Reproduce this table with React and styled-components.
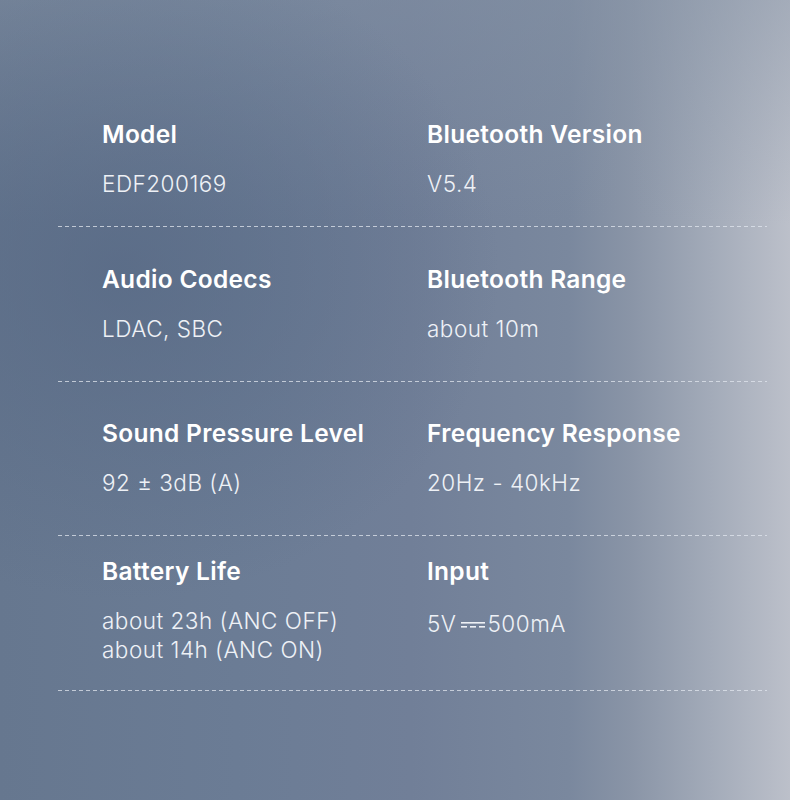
import React from "react";
import styled, { createGlobalStyle } from "styled-components";

const Global = createGlobalStyle`
  html, body { margin: 0; padding: 0; }
  body { font-family: Inter, "Noto Sans", sans-serif; }
`;

const Page = styled.div`
  width: 790px;
  height: 800px;
  overflow: hidden;
  box-sizing: border-box;
  padding: 91px 23px 0 58px;
  background:
    radial-gradient(ellipse 380px 330px at 120px 270px, rgba(86, 104, 132, 0.7), rgba(86, 104, 132, 0) 100%),
    linear-gradient(to bottom, rgba(135, 148, 166, 0.45), rgba(135, 148, 166, 0) 28%),
    linear-gradient(to right, #66778f 0%, #6b7c95 30%, #717f98 52%, #7a889e 72%, #8a95a7 80%, #a3abb9 90%, #bcc0ca 100%);
`;

const Row = styled.div`
  display: grid;
  grid-template-columns: 325px 1fr;
  align-content: center;
  align-items: start;
  box-sizing: border-box;
  height: ${(p) => (p.$first ? 136 : 154.5)}px;
  padding-left: 44px;
  padding-bottom: ${(p) => (p.$last ? 7 : 2)}px;
  background-image: repeating-linear-gradient(
    to right,
    rgba(225, 230, 238, 0.75) 0 4px,
    transparent 4px 7px
  );
  background-size: 100% 1px;
  background-repeat: no-repeat;
  background-position: bottom left;
`;

const Cell = styled.div`
  display: flex;
  flex-direction: column;
`;

const Title = styled.div`
  color: #ffffff;
  font-size: 24.5px;
  font-weight: 600;
  line-height: 30px;
  letter-spacing: 0.3px;
`;

const Value = styled.div`
  margin-top: 20px;
  color: #eef1f6;
  font-size: 22.5px;
  font-weight: 300;
  line-height: 29px;
  letter-spacing: 0.5px;
`;

const DcWrap = styled.span`
  display: inline-block;
  margin: 0 3px 0 4px;
  vertical-align: 3px;
`;

const DcSymbol = () => (
  <DcWrap>
    <svg width="24" height="8" viewBox="0 0 24 8">
      <rect x="0" y="1" width="24" height="1.6" fill="#eef1f6" />
      <rect x="0" y="5" width="6" height="1.6" fill="#eef1f6" />
      <rect x="9" y="5" width="6" height="1.6" fill="#eef1f6" />
      <rect x="18" y="5" width="6" height="1.6" fill="#eef1f6" />
    </svg>
  </DcWrap>
);

const rows = [
  [
    { t: "Model", v: ["EDF200169"] },
    { t: "Bluetooth Version", v: ["V5.4"] },
  ],
  [
    { t: "Audio Codecs", v: ["LDAC, SBC"] },
    { t: "Bluetooth Range", v: ["about 10m"] },
  ],
  [
    { t: "Sound Pressure Level", v: ["92 ± 3dB (A)"] },
    { t: "Frequency Response", v: ["20Hz - 40kHz"] },
  ],
  [
    { t: "Battery Life", v: ["about 23h (ANC OFF)", "about 14h (ANC ON)"] },
    { t: "Input", v: null, dc: true },
  ],
];

export default function App() {
  return (
    <>
      <Global />
      <Page>
        {rows.map((r, i) => (
          <Row key={i} $first={i === 0} $last={i === rows.length - 1}>
            {r.map((c) => (
              <Cell key={c.t}>
                <Title>{c.t}</Title>
                <Value>
                  {c.dc ? (
                    <>
                      5V<DcSymbol />500mA
                    </>
                  ) : (
                    c.v.map((line, k) => <div key={k}>{line}</div>)
                  )}
                </Value>
              </Cell>
            ))}
          </Row>
        ))}
      </Page>
    </>
  );
}
